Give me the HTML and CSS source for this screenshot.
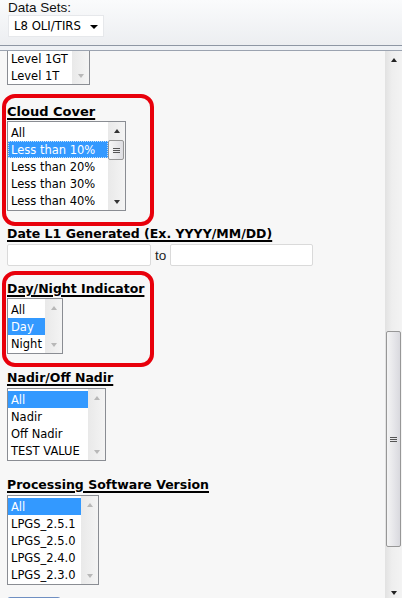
FILE: index.html
```html
<!DOCTYPE html>
<html>
<head>
<meta charset="utf-8">
<link rel="stylesheet" href="styles.css">
</head>
<body>
<div class="hdr">
  <div class="hdr-label">Data Sets:</div>
  <div class="ds-select"><span>L8 OLI/TIRS</span><span class="caret"></span></div>
</div>
<div class="hdr-band"></div>
<div class="main">
  <div class="content">
    <div class="sec">
      <div class="lb lb-level">
        <div class="lb-items lb-items-clip">
          <div class="opt">Level 1GT</div>
          <div class="opt">Level 1T</div>
        </div>
        <div class="lb-sb">
          <span class="sb-fill"></span>
          <span class="sb-btn"><span class="arr down dis"></span></span>
        </div>
      </div>
    </div>

    <div class="redbox box-cloud">
      <div class="hd hd-cloud">Cloud Cover</div>
      <div class="lb lb-cloud">
        <div class="lb-items">
          <div class="opt">All</div>
          <div class="opt sel focus">Less than 10%</div>
          <div class="opt">Less than 20%</div>
          <div class="opt">Less than 30%</div>
          <div class="opt">Less than 40%</div>
        </div>
        <div class="lb-sb">
          <span class="sb-btn"><span class="arr up"></span></span>
          <span class="thumb"><i></i><i></i><i></i></span>
          <span class="sb-fill"></span>
          <span class="sb-btn"><span class="arr down"></span></span>
        </div>
      </div>
    </div>

    <div class="sec sec-date">
      <div class="hd">Date L1 Generated (Ex. YYYY/MM/DD)</div>
      <div class="date-row">
        <span class="inp inp1"></span>
        <span class="to">to</span>
        <span class="inp inp2"></span>
      </div>
    </div>

    <div class="redbox box-day">
      <div class="hd">Day/Night Indicator</div>
      <div class="lb lb-day">
        <div class="lb-items">
          <div class="opt">All</div>
          <div class="opt sel">Day</div>
          <div class="opt">Night</div>
        </div>
        <div class="lb-sb">
          <span class="sb-btn"><span class="arr up dis"></span></span>
          <span class="sb-fill"></span>
          <span class="sb-btn"><span class="arr down dis"></span></span>
        </div>
      </div>
    </div>

    <div class="sec sec-nadir">
      <div class="hd">Nadir/Off Nadir</div>
      <div class="lb lb-nadir">
        <div class="lb-items">
          <div class="opt sel">All</div>
          <div class="opt">Nadir</div>
          <div class="opt">Off Nadir</div>
          <div class="opt">TEST VALUE</div>
        </div>
        <div class="lb-sb">
          <span class="sb-btn"><span class="arr up dis"></span></span>
          <span class="sb-fill"></span>
          <span class="sb-btn"><span class="arr down dis"></span></span>
        </div>
      </div>
    </div>

    <div class="sec sec-proc">
      <div class="hd">Processing Software Version</div>
      <div class="lb lb-proc">
        <div class="lb-items">
          <div class="opt sel">All</div>
          <div class="opt">LPGS_2.5.1</div>
          <div class="opt">LPGS_2.5.0</div>
          <div class="opt">LPGS_2.4.0</div>
          <div class="opt">LPGS_2.3.0</div>
        </div>
        <div class="lb-sb">
          <span class="sb-btn"><span class="arr up dis"></span></span>
          <span class="sb-fill"></span>
          <span class="sb-btn"><span class="arr down dis"></span></span>
        </div>
      </div>
      <div class="btn-peek"></div>
    </div>
  </div>
  <div class="vscroll">
    <span class="vs-btn top"><span class="arr up dark"></span></span>
    <span class="vs-thumb"><i></i><i></i><i></i></span>
    <span class="sb-fill"></span>
    <span class="vs-btn bottom"><span class="arr down dark"></span></span>
  </div>
</div>
</body>
</html>
```

FILE: styles.css
```css
* { box-sizing: border-box; }
html, body { margin: 0; padding: 0; }
body {
  width: 402px;
  height: 598px;
  overflow: hidden;
  background: #f7f7f7;
  font-family: "DejaVu Sans", sans-serif;
  color: #000;
}

/* header */
.hdr {
  height: 46px;
  background: linear-gradient(#fafbfc, #eceef1);
  border-bottom: 1px solid #8e97a4;
  padding-top: 1px;
}
.hdr-label {
  font-family: "Liberation Sans", Arial, sans-serif;
  font-size: 13.5px;
  line-height: 14px;
  padding-left: 8px;
  color: #111;
}
.ds-select {
  margin-left: 8px;
  width: 96px;
  height: 22px;
  background: #fff;
  border: 1px solid #e6e8eb;
  display: flex;
  align-items: center;
  justify-content: space-between;
  padding: 0 5px 0 5px;
  font-size: 11.7px;
}
.caret {
  width: 0; height: 0;
  border-left: 4px solid transparent;
  border-right: 4px solid transparent;
  border-top: 4px solid #000;
  margin-top: 1px;
}
.hdr-band {
  height: 5px;
  background: #eef1f5;
  border-bottom: 1px solid #9ba3b0;
}

/* main area */
.main {
  display: flex;
  height: 547px;
}
.content {
  flex: 1;
  padding-left: 2px;
  overflow: hidden;
}
.sec { padding-left: 5px; }

.hd {
  font-weight: bold;
  font-size: 12.5px;
  line-height: 16px;
  text-decoration: underline;
  text-decoration-thickness: 2px;
  text-underline-offset: 2px;
  white-space: nowrap;
  color: #000;
}
.hd-cloud { font-size: 13px; }

.redbox {
  width: 152px;
  border: 4px solid #e8000b;
  border-radius: 13px;
  padding: 6px 0 0 1px;
}
.box-cloud { margin-top: 9px; padding-bottom: 11px; }
.box-cloud .lb { margin-top: 1px; }
.box-day { margin-top: 5px; padding-bottom: 9px; }
.box-day .lb { margin-top: 1px; }

.date-row {
  display: flex;
  align-items: center;
  margin-top: 2px;
  height: 22px;
}
.inp {
  height: 22px;
  background: #fff;
  border: 1px solid #dadada;
  border-radius: 2px;
}
.inp1 { width: 144px; }
.inp2 { width: 143px; }
.to {
  font-family: "Liberation Sans", Arial, sans-serif;
  font-size: 13.5px;
  color: #222;
  margin: 0 4px 0 4px;
}

.sec-nadir { margin-top: 3px; }
.sec-nadir .lb { margin-top: 2px; }
.sec-proc { margin-top: 16px; }
.sec-proc .lb { margin-top: 2px; }

/* listbox */
.lb {
  display: flex;
  background: #fff;
  border: 1px solid #8a8d93;
}
.lb-level { width: 83px; border-top: none; }
.lb-cloud { width: 119px; }
.lb-day { width: 56px; }
.lb-nadir { width: 99px; }
.lb-proc { width: 92px; }

.lb-items {
  flex: 1;
  padding: 2px 0 1px 0;
  min-width: 0;
}
.lb-items-clip { padding: 0; margin-top: -1px; }
.opt {
  height: 17px;
  line-height: 18px;
  font-size: 11.5px;
  padding-left: 3px;
  white-space: nowrap;
  color: #000;
}
.opt.sel {
  background: #3399ff;
  color: #fff;
}
.opt.focus {
  outline: 1px dotted #bfe0ff;
  outline-offset: -1px;
}

.lb-sb {
  width: 17px;
  display: flex;
  flex-direction: column;
  background: linear-gradient(to right, #e9e9e9, #f4f4f4);
}
.sb-btn {
  height: 17px;
  display: flex;
  align-items: center;
  justify-content: center;
  flex-shrink: 0;
}
.sb-fill { flex: 1; }
.thumb {
  margin: 1px 1px 0 0;
  height: 20px;
  border: 1px solid #979797;
  border-radius: 2px;
  background: linear-gradient(to right, #f6f6f6, #dedee2);
  display: flex;
  flex-direction: column;
  align-items: center;
  justify-content: center;
  gap: 1px;
}
.thumb i, .vs-thumb i {
  display: block;
  width: 7px;
  height: 1px;
  background: #555;
}

.arr {
  width: 0; height: 0;
  border-left: 3.5px solid transparent;
  border-right: 3.5px solid transparent;
}
.arr.up { border-bottom: 4px solid #333; }
.arr.down { border-top: 4px solid #333; }
.arr.up.dis { border-bottom-color: #b8b8b8; }
.arr.down.dis { border-top-color: #b8b8b8; }
.arr.up.dark { border-bottom-color: #222; }
.arr.down.dark { border-top-color: #222; }

/* bottom button peeking */
.btn-peek {
  margin-top: 12px;
  width: 54px;
  height: 8px;
  border: 1px solid #6f8fc2;
  border-radius: 3px 3px 0 0;
  background: linear-gradient(#e8eef8, #d6e0f0);
}

/* page scrollbar */
.vscroll {
  width: 17px;
  display: flex;
  flex-direction: column;
  background: linear-gradient(to right, #e2e2e2, #eeeeee 40%, #f3f3f3);
}
.vs-btn {
  display: flex;
  align-items: center;
  justify-content: center;
  flex-shrink: 0;
}
.vs-btn.top { height: 17px; }
.vs-btn.bottom { height: 10px; }
.vs-thumb {
  margin: 263px 1px 0 1px;
  height: 216px;
  border: 1px solid #979797;
  border-radius: 2px;
  background: linear-gradient(to right, #f4f4f4, #e4e4e8 60%, #d9d9de);
  display: flex;
  flex-direction: column;
  align-items: center;
  justify-content: center;
  gap: 1px;
  flex-shrink: 0;
}
```
